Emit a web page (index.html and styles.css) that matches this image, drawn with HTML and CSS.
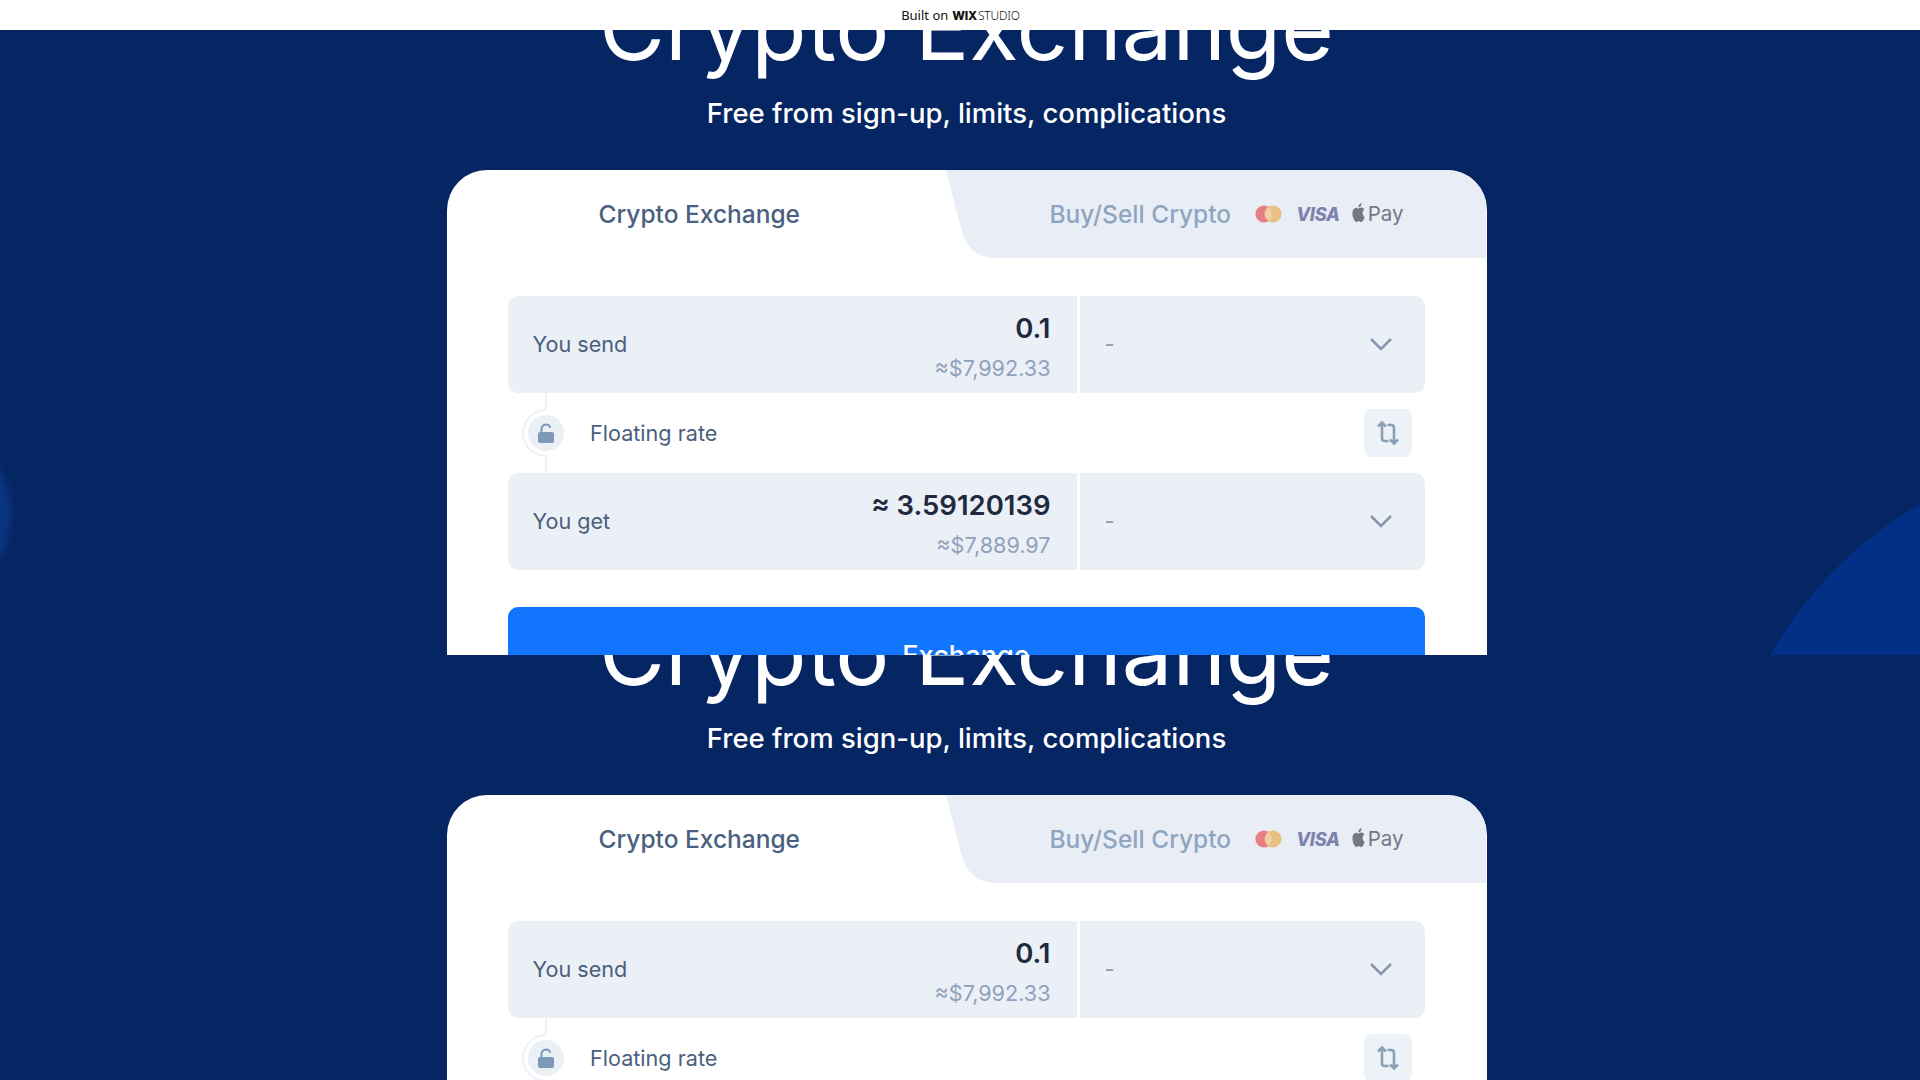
FILE: index.html
```html
<!DOCTYPE html>
<html lang="en">
<head>
<meta charset="utf-8">
<title>Crypto Exchange</title>
<link rel="stylesheet" href="styles.css">
</head>
<body>
<header class="wixbar"><span class="built">Built on</span><span class="wix">WIX</span><span class="studio">STUDIO</span></header>

<section class="strip strip-first">
  <div class="blob-left"></div>
  <div class="blob-right"></div>
  <h1 class="title">Crypto Exchange</h1>
  <p class="subtitle">Free from sign-up, limits, complications</p>
  <div class="card">
    <div class="tabs">
      <div class="tab-active">Crypto Exchange</div>
      <div class="tab-other">
        <svg class="tab-shape" width="540" height="88" viewBox="0 0 540 88"><path d="M0 0 L15 58 Q22 88 50 88 H540 V0 Z"/></svg>
        <span class="tab-label">Buy/Sell Crypto</span>
        <div class="pay">
          <svg class="mc" width="27" height="18" viewBox="0 0 27 18"><circle cx="9" cy="9" r="8.6" fill="#e57f84"/><circle cx="18" cy="9" r="8.6" fill="#e8c07f"/><path d="M13.5 2.2a8.6 8.6 0 0 1 0 13.6a8.6 8.6 0 0 1 0-13.6z" fill="#f0cfa8"/></svg>
          <span class="visa">VISA</span>
          <svg class="apple" width="15" height="19" viewBox="0 0 24 24" preserveAspectRatio="none"><path d="M12.152 6.896c-.948 0-2.415-1.078-3.96-1.04-2.04.027-3.91 1.183-4.961 3.014-2.117 3.675-.546 9.103 1.519 12.09 1.013 1.454 2.208 3.09 3.792 3.039 1.52-.065 2.09-.987 3.935-.987 1.831 0 2.35.987 3.96.948 1.637-.026 2.676-1.48 3.676-2.948 1.156-1.688 1.636-3.325 1.662-3.415-.039-.013-3.182-1.221-3.22-4.857-.026-3.04 2.48-4.494 2.597-4.559-1.429-2.09-3.623-2.324-4.39-2.376-2-.156-3.675 1.09-4.61 1.09zM15.53 3.83c.843-1.012 1.4-2.427 1.245-3.83-1.207.052-2.662.805-3.532 1.818-.78.896-1.454 2.338-1.273 3.714 1.338.104 2.715-.688 3.559-1.701"/></svg>
          <span class="paytext">Pay</span>
        </div>
      </div>
    </div>
    <div class="form">
      <div class="field">
        <div class="amount">
          <span class="label">You send</span>
          <div class="values"><span class="value">0.1</span><span class="usd">≈$7,992.33</span></div>
        </div>
        <div class="currency"><span class="dash">-</span><svg class="chev" width="24" height="14" viewBox="0 0 24 14"><path d="M2 2 L12 12 L22 2"/></svg></div>
      </div>
      <div class="rate">
        <div class="lock">
          <svg width="18" height="20" viewBox="0 0 18 20"><rect x="1" y="9" width="16" height="11" rx="2" fill="#7f98b8"/><path d="M4.5 10 V6 a4.5 4.5 0 0 1 8.8 -1.2" fill="none" stroke="#7f98b8" stroke-width="2"/></svg>
        </div>
        <span class="rate-label">Floating rate</span>
        <div class="swap">
          <svg width="26" height="24" viewBox="0 0 26 24"><path d="M3 5.5 L7 1.5 L11 5.5 M7 1.5 V17.5 Q7 20 10 20 H13.5 M12.5 4 H16 Q19 4 19 7 V22.5 M15 18.5 L19 22.5 L23 18.5"/></svg>
        </div>
      </div>
      <div class="field">
        <div class="amount">
          <span class="label">You get</span>
          <div class="values"><span class="value">≈ 3.59120139</span><span class="usd">≈$7,889.97</span></div>
        </div>
        <div class="currency"><span class="dash">-</span><svg class="chev" width="24" height="14" viewBox="0 0 24 14"><path d="M2 2 L12 12 L22 2"/></svg></div>
      </div>
      <button class="cta" type="button">Exchange</button>
    </div>
  </div>
</section>

<section class="strip strip-second">
  <div class="blob-left"></div>
  <div class="blob-right"></div>
  <h1 class="title">Crypto Exchange</h1>
  <p class="subtitle">Free from sign-up, limits, complications</p>
  <div class="card">
    <div class="tabs">
      <div class="tab-active">Crypto Exchange</div>
      <div class="tab-other">
        <svg class="tab-shape" width="540" height="88" viewBox="0 0 540 88"><path d="M0 0 L15 58 Q22 88 50 88 H540 V0 Z"/></svg>
        <span class="tab-label">Buy/Sell Crypto</span>
        <div class="pay">
          <svg class="mc" width="27" height="18" viewBox="0 0 27 18"><circle cx="9" cy="9" r="8.6" fill="#e57f84"/><circle cx="18" cy="9" r="8.6" fill="#e8c07f"/><path d="M13.5 2.2a8.6 8.6 0 0 1 0 13.6a8.6 8.6 0 0 1 0-13.6z" fill="#f0cfa8"/></svg>
          <span class="visa">VISA</span>
          <svg class="apple" width="15" height="19" viewBox="0 0 24 24" preserveAspectRatio="none"><path d="M12.152 6.896c-.948 0-2.415-1.078-3.96-1.04-2.04.027-3.91 1.183-4.961 3.014-2.117 3.675-.546 9.103 1.519 12.09 1.013 1.454 2.208 3.09 3.792 3.039 1.52-.065 2.09-.987 3.935-.987 1.831 0 2.35.987 3.96.948 1.637-.026 2.676-1.48 3.676-2.948 1.156-1.688 1.636-3.325 1.662-3.415-.039-.013-3.182-1.221-3.22-4.857-.026-3.04 2.48-4.494 2.597-4.559-1.429-2.09-3.623-2.324-4.39-2.376-2-.156-3.675 1.09-4.61 1.09zM15.53 3.83c.843-1.012 1.4-2.427 1.245-3.83-1.207.052-2.662.805-3.532 1.818-.78.896-1.454 2.338-1.273 3.714 1.338.104 2.715-.688 3.559-1.701"/></svg>
          <span class="paytext">Pay</span>
        </div>
      </div>
    </div>
    <div class="form">
      <div class="field">
        <div class="amount">
          <span class="label">You send</span>
          <div class="values"><span class="value">0.1</span><span class="usd">≈$7,992.33</span></div>
        </div>
        <div class="currency"><span class="dash">-</span><svg class="chev" width="24" height="14" viewBox="0 0 24 14"><path d="M2 2 L12 12 L22 2"/></svg></div>
      </div>
      <div class="rate">
        <div class="lock">
          <svg width="18" height="20" viewBox="0 0 18 20"><rect x="1" y="9" width="16" height="11" rx="2" fill="#7f98b8"/><path d="M4.5 10 V6 a4.5 4.5 0 0 1 8.8 -1.2" fill="none" stroke="#7f98b8" stroke-width="2"/></svg>
        </div>
        <span class="rate-label">Floating rate</span>
        <div class="swap">
          <svg width="26" height="24" viewBox="0 0 26 24"><path d="M3 5.5 L7 1.5 L11 5.5 M7 1.5 V17.5 Q7 20 10 20 H13.5 M12.5 4 H16 Q19 4 19 7 V22.5 M15 18.5 L19 22.5 L23 18.5"/></svg>
        </div>
      </div>
    </div>
  </div>
</section>
</body>
</html>
```
FILE: styles.css
```css
* { box-sizing: border-box; }
html, body { margin: 0; padding: 0; }
body {
  height: 1080px;
  overflow: hidden;
  display: flex;
  flex-direction: column;
  background: #052663;
  font-family: Inter, "Liberation Sans", sans-serif;
}

.wixbar {
  height: 30px;
  flex: none;
  background: #fff;
  display: flex;
  align-items: center;
  justify-content: center;
  padding-left: 1px;
  font-family: "Noto Sans", Inter, sans-serif;
  font-size: 13px;
  color: #111;
  z-index: 2;
}
.built { margin-right: 4px; font-weight: 400; }
.wix { font-weight: 800; font-family: Inter, sans-serif; font-size: 12px; letter-spacing: -0.2px; margin-right: 1px; }
.studio { font-weight: 300; font-size: 12px; letter-spacing: -0.2px; }

.strip {
  position: relative;
  overflow: hidden;
  display: flex;
  flex-direction: column;
  align-items: center;
  background: #052663;
  padding-left: 13px;
}
.strip-first { height: 625px; flex: none; }
.strip-second { flex: 1; }

.blob-left {
  position: absolute;
  left: -70px;
  top: 420px;
  width: 81px;
  height: 128px;
  border-radius: 50%;
  background: #0b3480;
  filter: blur(3px);
}
.blob-right {
  position: absolute;
  left: 1720px;
  top: 423px;
  width: 790px;
  height: 790px;
  border-radius: 50%;
  background: #023087;
}

.title {
  position: relative;
  margin: -56px 0 0;
  font-size: 90.4px;
  line-height: 106px;
  font-weight: 400;
  color: #fff;
  white-space: nowrap;
}
.subtitle {
  position: relative;
  margin: 15px 0 0;
  font-size: 27.5px;
  line-height: 36px;
  font-weight: 500;
  color: #fff;
}

.card {
  position: relative;
  margin-top: 39px;
  width: 1040px;
  flex: none;
  background: #fff;
  border-radius: 40px 40px 0 0;
  overflow: hidden;
  height: 900px;
}

.tabs {
  display: flex;
  height: 88px;
}
.tab-active {
  width: 499px;
  padding-left: 152px;
  display: flex;
  align-items: center;
  font-size: 24.5px;
  font-weight: 500;
  color: #4a607f;
}
.tab-other {
  position: relative;
  flex: 1;
  display: flex;
  align-items: center;
  padding-left: 104px;
}
.tab-shape {
  position: absolute;
  left: 0;
  top: 0;
  fill: #e9eef6;
}
.tab-label {
  position: relative;
  font-size: 24.5px;
  font-weight: 500;
  color: #8fa5c0;
  white-space: nowrap;
}
.pay {
  position: relative;
  margin-left: 13px;
  height: 37px;
  padding: 0 15px 0 10px;
  border: 1px solid #edf1f8;
  border-radius: 8px;
  display: flex;
  align-items: center;
}
.visa {
  margin-left: 14px;
  font-family: Inter, sans-serif;
  font-weight: 800;
  font-style: italic;
  font-size: 18.2px;
  line-height: 20px;
  letter-spacing: -0.3px;
  color: #7f82ad;
}
.apple { margin-left: 11px; margin-top: -3px; fill: #727884; }
.paytext {
  margin-left: 2px;
  font-size: 20.5px;
  font-weight: 400;
  color: #727884;
  line-height: 24px;
}

.form {
  padding: 38px 62px 0 61px;
  display: flex;
  flex-direction: column;
}
.field {
  display: grid;
  grid-template-columns: 569px 345px;
  gap: 3px;
  height: 97px;
}
.amount {
  background: #ebeff6;
  border-radius: 10px 0 0 10px;
  display: flex;
  align-items: center;
  justify-content: space-between;
  padding: 0 26px 0 25px;
}
.label, .rate-label {
  font-size: 21.6px;
  color: #4a5f7d;
  font-weight: 400;
}
.label { margin-bottom: 2px; }
.values {
  display: flex;
  flex-direction: column;
  align-items: flex-end;
  gap: 9px;
  padding-top: 3px;
}
.value {
  font-size: 27.5px;
  line-height: 34px;
  font-weight: 600;
  color: #1f2a3f;
}
.usd {
  font-size: 21.6px;
  line-height: 28px;
  color: #8ea3bb;
}
.currency {
  background: #ebeff6;
  border-radius: 0 10px 10px 0;
  display: flex;
  align-items: center;
  justify-content: space-between;
  padding: 0 32px 2px 25px;
}
.dash { font-size: 22px; color: #8a9bb0; }
.chev { fill: none; stroke: #8598ad; stroke-width: 2.6; }

.rate {
  position: relative;
  height: 80px;
  display: flex;
  align-items: center;
  padding-left: 82.5px;
}
.rate::before {
  content: "";
  position: absolute;
  left: 37px;
  top: 0;
  bottom: 0;
  width: 2px;
  background: #eef1f5;
}
.lock {
  position: absolute;
  left: 14px;
  top: 16px;
  width: 48px;
  height: 48px;
  border-radius: 50%;
  background: #ebeff6;
  border: 6px solid #fff;
  display: flex;
  align-items: center;
  justify-content: center;
}
.lock::after {
  content: "";
  position: absolute;
  inset: -6px;
  border-radius: 50%;
  border: 2px solid transparent;
  border-top-color: #eef1f5;
  border-left-color: #eef1f5;
  transform: rotate(-45deg);
}
.swap {
  margin-left: auto;
  margin-right: 13px;
  width: 48px;
  height: 48px;
  border-radius: 8px;
  background: #edf1f8;
  display: flex;
  align-items: center;
  justify-content: center;
}
.swap svg { fill: none; stroke: #8ba0b7; stroke-width: 2.6; }

.cta {
  margin-top: 37px;
  height: 96px;
  border: 0;
  border-radius: 10px;
  background: #1275ff;
  color: #fff;
  font-family: inherit;
  font-size: 27.2px;
  font-weight: 500;
}
```
